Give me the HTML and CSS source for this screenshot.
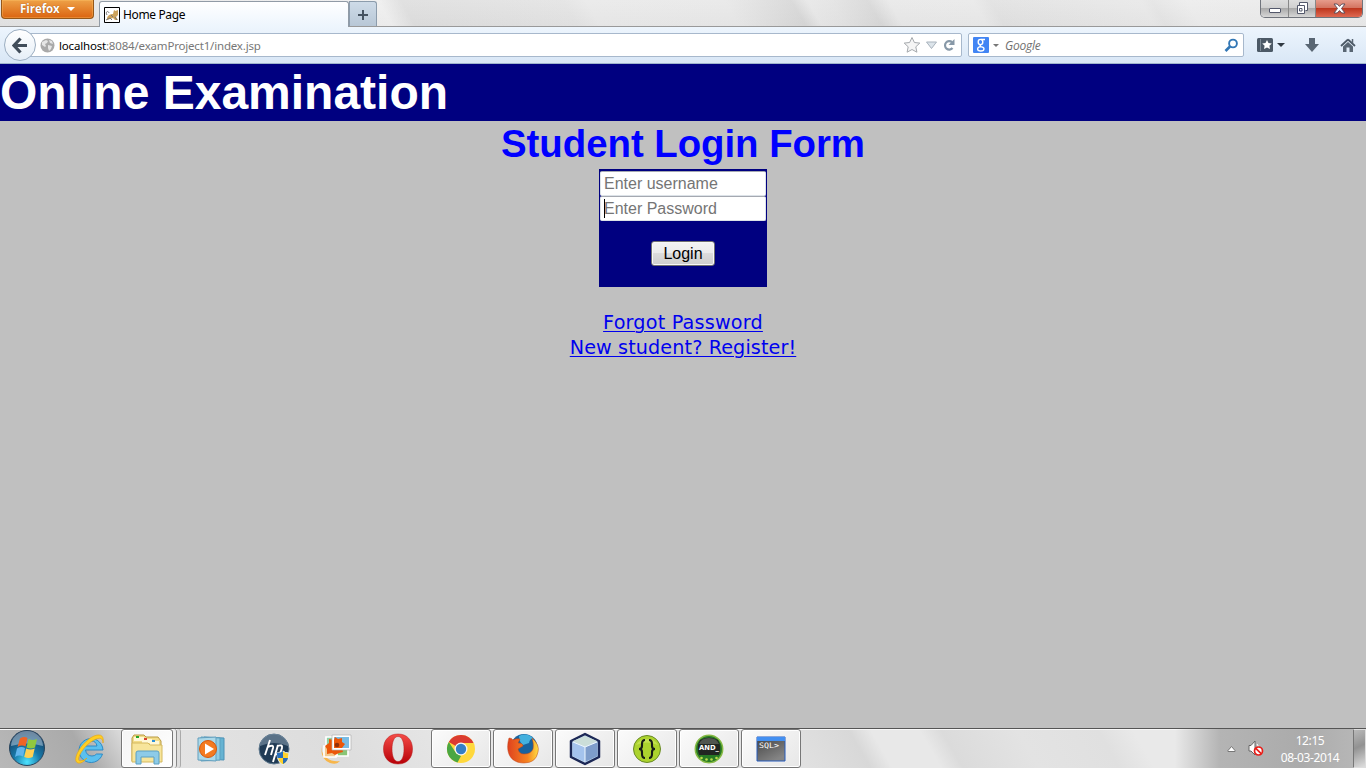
FILE: index.html
```html
<!DOCTYPE html>
<html lang="en">
<head>
<meta charset="utf-8">
<title>Home Page</title>
<link rel="stylesheet" href="styles.css">
</head>
<body>
<div class="screen">
  <header class="titlebar">
    <div class="firefox-button"><span>Firefox</span><i class="caret"></i></div>
    <div class="tab">
      <svg class="favicon" width="16" height="16" viewBox="0 0 16 16"><path fill="#fff" stroke="#000" d="M.5.5h15v15H.5z"/><path d="M3 11c1-3 3-4 6-4l1-4 1.500 1L14 3v5l-2 2 2 3h-3l-2-2-3 1-3 1z" fill="#cda35c"/><path d="M3 8c-2-3 1-5 2-2M2 13l4-2 2 2M7 8l2 2M11 10l2 3" fill="none" stroke="#777"/></svg>
      <span class="tab-title">Home Page</span>
    </div>
    <div class="new-tab"><svg width="12" height="12" viewBox="0 0 12 12"><path d="M6 1v10M1 6h10" stroke="#465361" stroke-width="2"/></svg></div>
    <div class="window-controls">
      <div class="wc min"><svg width="14" height="7" viewBox="0 0 14 7"><rect x="1.500" y="1.500" width="11" height="4" rx=".5" fill="#fff" stroke="#53586b"/></svg></div>
      <div class="wc max"><svg width="13" height="13" viewBox="0 0 13 13"><path d="M3.500 3.500v-3h8v8h-2" fill="#fff" stroke="#53586b"/><path d="M1.500 3.500h7v8h-7z" fill="#fff" stroke="#53586b"/><path d="M3.500 6.500h2.500v2.500H3.500z" fill="#fff" stroke="#53586b"/></svg></div>
      <div class="wc close"><svg width="13" height="11" viewBox="0 0 13 11"><path d="M1 1h3.200l2.300 2.400L8.800 1H12L8.500 5.500 12 10H8.800L6.500 7.600 4.200 10H1l3.500-4.500z" fill="#fff" stroke="#61505c"/></svg></div>
    </div>
  </header>

  <nav class="toolbar">
    <div class="back"><svg width="16" height="17" viewBox="0 0 16 17"><path d="M8.500 1.500L2 8.500l6.500 7M2.500 8.500H15" fill="none" stroke="#414d5a" stroke-width="3.200"/></svg></div>
    <div class="urlbar">
      <svg class="globe" width="15" height="15" viewBox="0 0 15 15"><circle cx="7.500" cy="7.500" r="7" fill="#a9a9a9"/><path d="M2 4l4-2 2 1-1 2-2 1 1 2-1 1-3-2zM9 2l3 1 1 3-3-1zM8 7l4 1-1 3-2 2-1-3z" fill="#e5e5e5"/></svg>
      <span class="url"><b>localhost</b>:8084/examProject1/index.jsp</span>
      <svg class="url-icons" width="54" height="18" viewBox="0 0 54 18"><path d="M9 1.500l2.400 5 5.400.6-4 3.700 1.100 5.400L9 13.500l-4.900 2.700 1.100-5.400-4-3.700 5.400-.6z" fill="#f5f5f5" stroke="#a5a9ad"/><path d="M23.500 6h10l-5 6.500z" fill="#dce4ea" stroke="#a9b3bd"/><path d="M49 6.200A4.200 4.200 0 1 0 49.500 12" fill="none" stroke="#8798a7" stroke-width="2.200"/><path d="M51.500 3v6H45.500z" fill="#8798a7"/></svg>
    </div>
    <div class="search">
      <svg width="16" height="16" viewBox="0 0 16 16"><rect width="16" height="16" rx="1" fill="#4285f4"/><ellipse cx="7.500" cy="5" rx="2.300" ry="2.600" fill="none" stroke="#fff" stroke-width="1.400"/><path d="M8 2.500h4M8 7.600q-2 1.300 0 2M8 9.600q3 .6 3 2.200 0 2.200-3.200 2.200T4.600 12q0-2.200 3.400-2.400z" fill="none" stroke="#fff" stroke-width="1.300"/></svg>
      <i class="small-caret"></i>
      <span class="search-text">Google</span>
      <svg class="magnifier" width="15" height="15" viewBox="0 0 15 15"><circle cx="9" cy="5.500" r="3.900" fill="none" stroke="#3277b5" stroke-width="1.900"/><path d="M6 8.500L1.500 13" stroke="#3277b5" stroke-width="2.600"/></svg>
    </div>
    <div class="tools">
      <svg width="16" height="14" viewBox="0 0 16 14"><rect width="16" height="14" rx="1.500" fill="#4c5966"/><path d="M3.500 1v12" stroke="#7e8b97"/><path d="M10 2l1.500 3 3.300.4-2.400 2.300.6 3.300-3-1.600L7 11l.6-3.300-2.400-2.300L8.500 5z" fill="#fff"/></svg>
      <i class="dark-caret"></i>
      <svg class="download" width="14" height="14" viewBox="0 0 14 14"><path d="M4 0h6v6h4l-7 8-7-8h4z" fill="#596673"/></svg>
      <svg class="home" width="16" height="15" viewBox="0 0 16 15"><path d="M8 1.500L1 8M8 1.500L15 8" fill="none" stroke="#4c5966" stroke-width="1.800"/><path d="M3 8.500L8 4l5 4.500V14H9.500V9.500h-3V14H3z" fill="#596673"/><path d="M12.500 1v4" stroke="#596673" stroke-width="1.500"/></svg>
    </div>
  </nav>

  <main class="page">
    <h1 class="site-title">Online Examination</h1>
    <h2 class="form-title">Student Login Form</h2>
    <form class="login">
      <div class="field">Enter username</div>
      <div class="field"><i class="cursor"></i>Enter Password</div>
      <div class="login-button">Login</div>
    </form>
    <div class="links">
      <a class="forgot" href="#">Forgot Password</a>
      <a class="register" href="#">New student? Register!</a>
    </div>
  </main>

  <footer class="taskbar">
    <div class="start"><svg width="38" height="38" viewBox="0 0 38 38"><defs><radialGradient id="orb" cx=".5" cy=".9" r=".85"><stop offset="0" stop-color="#4de3ff"/><stop offset=".45" stop-color="#1779a9"/><stop offset="1" stop-color="#173a5f"/></radialGradient></defs><circle cx="19" cy="19" r="17.500" fill="url(#orb)" stroke="#29445c"/><path d="M3 17a16 15 0 0 1 32 0q-16-5-32 0z" fill="#d6e7f2" opacity=".45"/><path d="M12 9.500q4-2.500 7.500-.5l-2 8.500q-4-2-8 .5z" fill="#ef6425"/><path d="M20.500 10q4 2 8.500 0l-2 8.500q-4 2-8.500 0z" fill="#91c83e"/><path d="M9 19.500q4-2.500 8-.5l-2 8.500q-4-2-8 .5z" fill="#61b5ed"/><path d="M18.200 19.500q4 2 8.500 0l-2 8.500q-4 2-8.500 0z" fill="#ffd052"/></svg></div>
    <div class="launcher ie"><svg width="32" height="32" viewBox="0 0 32 32"><path d="M28.500 21A12 12 0 1 1 29 17H11.500q1 6 6.500 6 3 0 4.500-2zM11.500 13H23q-1-5-5.500-5-5 0-6 5z" fill="#5bc0ef" fill-rule="evenodd" stroke="#2586c4" stroke-width=".9"/><path d="M4 30C-3 28 7 9 20 3c8-3 10 1 9 7 0-5-3-6-9-3C10 12 1 27 6 28q4 0 7-3-5 6-9 5z" fill="#ffce23" stroke="#e6a812" stroke-width=".7"/></svg></div>
    <div class="task explorer"><svg width="34" height="32" viewBox="0 0 34 32"><path d="M2 5l2-3h10l2 2h12l3 4v20H2z" fill="#f2dc89" stroke="#b89a42"/><path d="M4 4h10v4H4zM12 6h10v4H12zM20 8h9v4h-9z" fill="#fff8d7"/><path d="M6 3h3v2H6z" fill="#23a628"/><path d="M14 5h3v2h-3z" fill="#d64231"/><path d="M22 7h3v2h-3z" fill="#2d91d9"/><path d="M2 10h16l2 2h12v17H2z" fill="#f7e59b" stroke="#d5b95f"/><path d="M6 31V20q0-2 2-2h19q2 0 2 2v11h-5v-7H11v7z" fill="#8dcbe8" stroke="#5ca0c2"/></svg></div>
    <div class="stack"></div><div class="stack second"></div>
    <div class="launcher wmp"><svg width="30" height="28" viewBox="0 0 30 28"><path d="M7 2l20 1v22L7 24z" fill="#66b3d2" stroke="#4d92b7"/><path d="M4 2l19 1v22L4 26z" fill="#91cce1" stroke="#5ba1bf"/><path d="M1 3l18-1v24L1 25z" fill="#acd9e9" stroke="#639fbe"/><circle cx="11" cy="14" r="8.500" fill="#f47b20" stroke="#d6580a"/><path d="M8 8.500l9 5.500-9 5.500z" fill="#fff"/></svg></div>
    <div class="launcher hp"><svg width="32" height="32" viewBox="0 0 32 32"><circle cx="16" cy="16" r="15" fill="#203b55" stroke="#617b90"/><path d="M2 13a14 12 0 0 1 28 0q-14-6-28 0z" fill="#7991a4" opacity=".65"/><path d="M12 7L7 22M10 14q6-3 5 1l-2 7M20 12l-5 17M19 13q6-2 5 2-2 8-6 6" fill="none" stroke="#fff" stroke-width="1.900"/><path d="M19 20q4 0 6-2 2 2 6 2 0 9-6 12-6-3-6-12z" fill="#ffd22c" stroke="#e5eef5"/><path d="M25 18v7h-5.500q-.6-2-.5-5 4 0 6-2zM25 25h5q-1 4-5 6z" fill="#276dbb"/></svg></div>
    <div class="launcher photo"><svg width="32" height="32" viewBox="0 0 32 32"><path d="M2 10q-2 11 5 15 5 4 13 3-3 4-10 2Q-1 26 2 10z" fill="#f8b64a"/><path d="M6 4h15v12H6z" fill="#8fd0a5" stroke="#fff" stroke-width="1.700"/><path d="M4 13h12v11H4z" fill="#f3c98e" stroke="#fff" stroke-width="1.700"/><path d="M17 14h11v9H17z" fill="#8ac576" stroke="#fff" stroke-width="1.700"/><path d="M14 3h16v13H14z" fill="#79bce4"/><path d="M15 4l3 2 4-1v4l3 2-3 4 1 4-4 1-4 2-3-2-5 1v-5l-2-3 4-3V6l5 1z" fill="#ec5709"/><path d="M13 3h17v13H13z" fill="none" stroke="#fff" stroke-width="2"/><path d="M12 2h19v15H12z" fill="none" stroke="#b1b1b1" stroke-width=".7"/><circle cx="17" cy="12" r="2.300" fill="#93300a"/></svg></div>
    <div class="launcher opera"><svg width="32" height="32" viewBox="0 0 32 32"><defs><linearGradient id="op" x2="0" y2="1"><stop stop-color="#f54c47"/><stop offset="1" stop-color="#b70007"/></linearGradient></defs><path d="M16 1C7 1 1.500 7 1.500 16S7 31 16 31s14.500-6 14.500-15S25 1 16 1zm0 2.500c4 0 6 5.500 6 12.500s-2 12.500-6 12.500-6-5.500-6-12.500 2-12.500 6-12.500z" fill="url(#op)" fill-rule="evenodd" stroke="#b51a1a" stroke-width=".5"/></svg></div>
    <div class="task chrome"><svg width="30" height="30" viewBox="0 0 30 30"><circle cx="15" cy="15" r="14" fill="#ffd83c"/><path d="M15 15L2.800 8A14 14 0 0 1 27.500 9H15z" fill="#db3b30"/><path d="M2.800 8L10 19l5 3-3.500 6.500A14 14 0 0 1 2.800 8z" fill="#4aa642"/><circle cx="15" cy="15" r="6.500" fill="#f5f5f5"/><circle cx="15" cy="15" r="5.200" fill="#347fc4"/></svg></div>
    <div class="task firefox"><svg width="32" height="32" viewBox="0 0 32 32"><defs><linearGradient id="fx"><stop stop-color="#df421f"/><stop offset=".65" stop-color="#f68420"/><stop offset="1" stop-color="#ffdf43"/></linearGradient></defs><circle cx="17" cy="14.500" r="13.500" fill="#17629e"/><path d="M12 3q8-4 15 3-4-1-5 4l-6 2q-4-3-4-9z" fill="#43b0de"/><path d="M2 5q3 0 4 2 3-2 7-1l-2 4q5 0 5 3l-5 3q1 5 6 5 7 0 9-5 1-5-1-11 8 7 6 14-2 11-14 11C3 30-2 19 2 5z" fill="url(#fx)" stroke="#bf4519" stroke-width=".5"/></svg></div>
    <div class="task netbeans"><svg width="32" height="34" viewBox="0 0 32 34"><path d="M16 2l14 7v16l-14 7-14-7V9z" fill="#bfd6eb" stroke="#1c2856" stroke-width="2.500" stroke-linejoin="round"/><path d="M4 9l12-5 12 5-12 6z" fill="#cbded9"/><path d="M3.500 10L16 15v15L3.500 24z" fill="#a4c3ed"/><path d="M16 15l12.500-5v14L16 30z" fill="#7e9dcb"/><path d="M4 10l12 5 12-5M16 15v15" fill="none" stroke="#eef8ff"/></svg></div>
    <div class="task braces"><svg width="30" height="30" viewBox="0 0 30 30"><circle cx="15" cy="15" r="13.500" fill="#acd32e" stroke="#688926"/><path d="M4 11a12 10 0 0 1 22 0q-11-5-22 0z" fill="#d2eb68" opacity=".6"/><path d="M13 6q-3 0-3 4v2q0 3-3 3 3 0 3 3v2q0 4 3 4M17 6q3 0 3 4v2q0 3 3 3-3 0-3 3v2q0 4-3 4" fill="none" stroke="#171c17" stroke-width="2.100"/></svg></div>
    <div class="task android"><svg width="30" height="30" viewBox="0 0 30 30"><circle cx="15" cy="15" r="13.700" fill="#277b24" stroke="#86b944" stroke-width="1.500"/><circle cx="7.500" cy="24" r="1.300" fill="#bbdc4b"/><circle cx="12.500" cy="25.500" r="1.300" fill="#bbdc4b"/><circle cx="17.500" cy="25.500" r="1.300" fill="#bbdc4b"/><circle cx="22.500" cy="24" r="1.300" fill="#bbdc4b"/><path d="M6 6q9-5 18 0 4 7 1 15H5Q2 13 6 6z" fill="#212622"/><path d="M5 10q2-6 10-6t10 6z" fill="#50554f"/><text x="5" y="15.500" textLength="20" lengthAdjust="spacingAndGlyphs" font-family="DejaVu Sans" font-weight="bold" font-size="7" fill="#fff">AND_</text></svg></div>
    <div class="task sql"><svg width="30" height="26" viewBox="0 0 30 26"><defs><linearGradient id="sq" x2=".6" y2="1"><stop stop-color="#424242"/><stop offset="1" stop-color="#858585"/></linearGradient></defs><path d="M1 1h28v24H1z" fill="url(#sq)" stroke="#245bbc"/><path d="M1 1h28v4H1z" fill="#438ff1"/><text x="3" y="12" textLength="20" lengthAdjust="spacingAndGlyphs" font-family="DejaVu Sans Mono" font-size="7.500" fill="#fff">SQL&gt;</text></svg></div>
    <div class="tray">
      <svg class="tray-up" width="9" height="6" viewBox="0 0 9 6"><path d="M4.500.5l3.500 4v1H1v-1z" fill="#fff" stroke="#777"/></svg>
      <svg class="volume" width="16" height="17" viewBox="0 0 16 17"><path d="M1 5.500h2L7 1v14l-4-4H1z" fill="#fff" stroke="#666"/><path d="M9 4q2 2 1 5" fill="none" stroke="#fff"/><circle cx="10.500" cy="11" r="4" fill="#fff" stroke="#e91d18" stroke-width="1.700"/><path d="M7.800 8.300l5.400 5.400" stroke="#e91d18" stroke-width="1.700"/></svg>
      <div class="clock"><span class="time">12:15</span><span class="date">08-03-2014</span></div>
      <div class="show-desktop"></div>
    </div>
  </footer>
</div>
</body>
</html>
```
FILE: styles.css
```css
* { box-sizing: border-box; }
body { margin: 0; overflow: hidden; font-family: "Noto Sans", "Open Sans", sans-serif; }
svg { display: block; flex: none; }
.screen { width: 1366px; height: 768px; display: flex; flex-direction: column; background: #c0c0c0; }

.titlebar {
  height: 27px; flex: none; display: flex; align-items: flex-start; border-bottom: 1px solid #999;
  background:
    linear-gradient(rgba(255,255,255,.1), rgba(0,0,0,.015)),
    linear-gradient(60deg, #e3e3e3 0, #efefef 340px, #dedede 360px, #e3e3e3 500px, #e9e9e9 520px, #e8e8e8 640px, #d7d7d7 698px, #e7e7e7 712px, #e3e3e3 732px, #d8d8d8 764px, #e8e8e8 782px, #e9e9e9 855px, #e1e1e1 870px, #e8e8e8 1000px, #e4e4e4 1010px, #ececec 1040px, #e9e9e9 1200px);
}
.firefox-button { width: 93px; height: 19px; margin-left: 1px; padding: 0 0 1px 18px; display: flex; align-items: center; gap: 7px; border: 1px solid #955719; border-top: 0; border-radius: 0 0 4px 4px; background: linear-gradient(#eea147, #db6411); color: #fff; font: bold 11.5px/16px "Open Sans", sans-serif; letter-spacing: -.05px; text-shadow: 0 0 1px #813900; box-shadow: inset 0 0 0 1px rgba(255,200,110,.35); }
.caret { border: 4px solid transparent; border-top-color: #fff; border-bottom: 0; }
.tab { width: 250px; height: 26px; margin: 1px 0 0 5px; padding: 0 0 0 4px; display: flex; align-items: center; gap: 3px; border: 1px solid #919ba6; border-bottom: 0; border-radius: 3px 3px 0 0; background: linear-gradient(#fff, #edf5fd); }
.tab-title { color: #000; font-size: 12px; letter-spacing: -.36px; }
.new-tab { width: 28px; height: 25px; margin-top: 1px; display: flex; align-items: center; justify-content: center; padding-top: 2px; border: 1px solid #8c9cac; border-bottom: 0; border-radius: 0 3px 0 0; background: linear-gradient(#cedbe8, #b8c7d6); }
.window-controls { display: flex; margin: 0 3px 0 auto; height: 18px; border: 1px solid #70747c; border-top: 0; border-radius: 0 0 5px 5px; overflow: hidden; }
.wc { height: 17px; display: flex; align-items: center; justify-content: center; background: linear-gradient(#ddd 0, #d0d0d0 45%, #aaa 50%, #d7d7d7); border-right: 1px solid #888; }
.min { width: 28px; padding-top: 4px; } .max { width: 27px; }
.close { width: 46px; border: 0; background: linear-gradient(#e69c8b 0, #d47561 45%, #be371e 50%, #df6952); }

.toolbar { height: 37px; flex: none; display: flex; align-items: center; background: linear-gradient(#edf5fd, #d9e7f6); border-bottom: 1px solid #a0b5cd; }
.back { width: 32px; height: 32px; margin-left: 4px; z-index: 1; flex: none; display: flex; align-items: center; justify-content: center; border: 1px solid #9caec1; border-radius: 50%; background: linear-gradient(#fff, #e5eef7); }
.urlbar, .search { height: 24px; display: flex; align-items: center; background: #fff; border: 1px solid #a7b8cc; border-radius: 2px; }
.urlbar { width: 934px; margin-left: -8px; padding-left: 11px; }
.url { margin-left: 4px; font-size: 11.5px; letter-spacing: -.18px; color: #777; white-space: nowrap; }
.url b { color: #000; font-weight: 400; }
.url-icons { margin-left: auto; margin-right: 4px; }
.search { width: 276px; margin-left: 6px; padding: 0 4px 0 4px; }
.small-caret, .dark-caret { border: 3px solid transparent; border-top-color: #777; border-bottom: 0; margin-left: 4px; }
.search-text { margin-left: 6px; padding-top: 2px; font: italic 12px/20px "Open Sans", sans-serif; color: #707070; letter-spacing: -.25px; }
.magnifier { margin-left: auto; }
.tools { display: flex; align-items: center; margin-left: 13px; }
.dark-caret { border-width: 4px 4px 0; border-top-color: #303942; margin-left: 4px; }
.download { margin-left: 20px; } .home { margin-left: 21px; }

.page { height: 664px; flex: none; display: flex; flex-direction: column; align-items: center; }
.site-title { width: 100%; height: 57px; margin: 0; background: #000080; color: #fff; font: bold 48px/57px "Liberation Sans", Arial, sans-serif; }
.form-title { height: 48px; margin: 0; color: #0000ff; font: bold 38.4px/46px "Liberation Sans", Arial, sans-serif; letter-spacing: -.04px; }
.login { width: 168px; height: 118px; padding: 2px 1px 0; display: flex; flex-direction: column; align-items: center; background: #000080; }
.field { position: relative; width: 166px; height: 25px; padding-left: 3px; background: #fff; border: 1px solid #dce2e8; border-top-color: #a5a9b1; border-radius: 2px; color: #757575; font: 16px/23px "Liberation Sans", Arial, sans-serif; }
.cursor { position: absolute; left: 3px; top: 2px; width: 1px; height: 19px; background: #000; }
.login-button { width: 64px; height: 25px; margin-top: 20px; border: 1px solid #707070; border-radius: 3px; background: linear-gradient(#f3f3f3 0, #ebebeb 48%, #dcdcdc 50%, #cdcdcd); box-shadow: inset 0 0 0 1px #f7f7f7; color: #000; text-align: center; font: 16px/23px "Liberation Sans", Arial, sans-serif; }
.links { margin-top: 23px; display: flex; flex-direction: column; align-items: center; }
.links a { color: #0000ee; font: 19.2px/25px "DejaVu Sans", Verdana, sans-serif; text-decoration-thickness: 1px; text-underline-offset: 2px; white-space: nowrap; }
.links .forgot { letter-spacing: .2px; }
.links .register { letter-spacing: .1px; }

.taskbar {
  height: 40px; flex: none; display: flex; align-items: flex-start; border-top: 1px solid #555; box-shadow: inset 0 1px #f8f8f8;
  background: linear-gradient(60deg, #b8b8b8 0, #aaa 80px, #e4e4e4 132px, #ddd 300px, #e7e7e7 420px, #e2e2e2 690px, #d8d8d8 754px, #e8e8e8 773px, #e8e8e8 815px, #dbdbdb 834px, #e3e3e3 900px, #e0e0e0 970px, #e9e9e9 1000px);
}
.start { margin-left: 8px; }
.launcher { height: 39px; display: flex; align-items: center; justify-content: center; flex: none; }
.ie { width: 62px; margin-left: 13px; }
.task { width: 60px; height: 39px; display: flex; align-items: center; justify-content: center; flex: none; border: 1px solid #777; border-radius: 3px; background: linear-gradient(135deg, #fbfbfb, #e7e7e7); box-shadow: inset 0 0 0 1px #fff; }
.explorer { width: 52px; background: linear-gradient(135deg, #f4f4f4, #fff); }
.stack { width: 4px; height: 39px; flex: none; border-right: 1px solid #888; border-radius: 0 3px 3px 0; background: #eee; }
.second { border-color: #aaa; background: #ddd; }
.wmp { width: 62px; }
.hp, .photo, .opera { width: 62px; }
.chrome { margin-left: 2px; }
.task + .task { margin-left: 2px; }
.tray { flex: 1; height: 39px; display: flex; align-items: center; background: linear-gradient(90deg, transparent 374px, #b4b4b4 419px, #ababab 500px, #b9b9b9); }
.tray-up { margin-left: 426px; } .volume { margin-left: 12px; }
.clock { width: 84px; margin-left: 4px; flex: none; display: flex; flex-direction: column; align-items: center; color: #fff; font-size: 12px; line-height: 17px; letter-spacing: -.4px; }
.show-desktop { width: 13px; height: 39px; margin-left: auto; flex: none; border: 1px solid #ddd; border-left-color: #777; background: linear-gradient(155deg, #b9b9b9, #929292 45%, #dedede); }
```
